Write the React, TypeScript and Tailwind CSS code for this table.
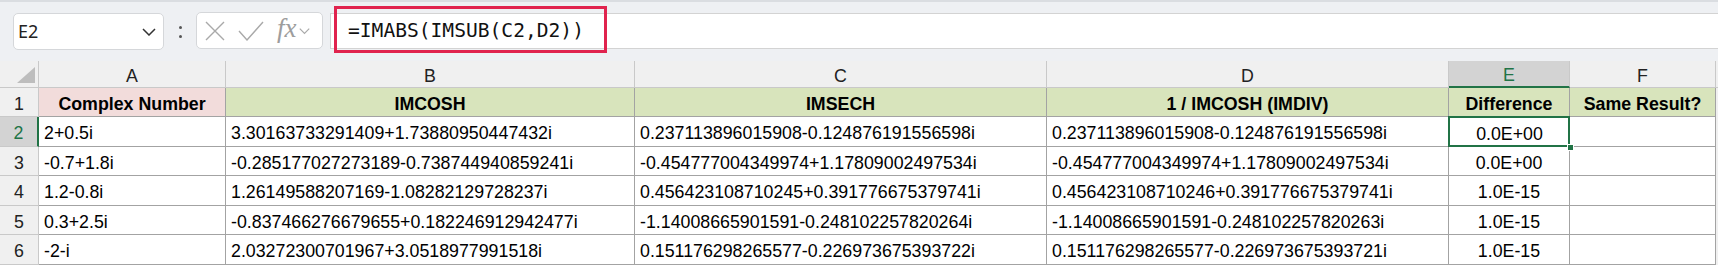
import { ReactNode } from "react";

const rows: string[][] = [
  ["2+0.5i", "3.30163733291409+1.73880950447432i", "0.237113896015908-0.124876191556598i", "0.237113896015908-0.124876191556598i", "0.0E+00", ""],
  ["-0.7+1.8i", "-0.285177027273189-0.738744940859241i", "-0.454777004349974+1.17809002497534i", "-0.454777004349974+1.17809002497534i", "0.0E+00", ""],
  ["1.2-0.8i", "1.26149588207169-1.08282129728237i", "0.456423108710245+0.391776675379741i", "0.456423108710246+0.391776675379741i", "1.0E-15", ""],
  ["0.3+2.5i", "-0.837466276679655+0.182246912942477i", "-1.14008665901591-0.248102257820264i", "-1.14008665901591-0.248102257820263i", "1.0E-15", ""],
  ["-2-i", "2.03272300701967+3.0518977991518i", "0.151176298265577-0.226973675393722i", "0.151176298265577-0.226973675393721i", "1.0E-15", ""],
];

const headers = ["Complex Number", "IMCOSH", "IMSECH", "1 / IMCOSH (IMDIV)", "Difference", "Same Result?"];
const letters = ["A", "B", "C", "D", "E", "F"];

function Chevron({ className }: { className: string }) {
  return (
    <svg width="14" height="8" viewBox="0 0 14 8" className={className}>
      <path d="M1 1l6 6 6-6" fill="none" stroke="currentColor" strokeWidth="1.5" />
    </svg>
  );
}

function Cell({ children, className = "" }: { children?: ReactNode; className?: string }) {
  return (
    <div className={"flex items-center pt-[3px] border-r border-b border-[#a3a3a3] whitespace-nowrap overflow-hidden leading-[20px] " + className}>
      {children}
    </div>
  );
}

export default function App() {
  return (
    <div className="w-[1718px] h-[269px] overflow-hidden bg-white text-black font-['Liberation_Sans',Arial,sans-serif]">
      {/* formula bar */}
      <div className="h-[61px] bg-[#eef0f3] border-t-2 border-[#dadde1] flex items-start pt-[11px]">
        <div className="ml-[13px] w-[151px] h-[37px] bg-white border border-[#d5d7da] rounded-[5px] flex items-center pl-[4px] pr-[7px]">
          <span className="text-[18px] text-[#222] font-['Noto_Sans',sans-serif] flex-1">E2</span>
          <Chevron className="text-[#333]" />
        </div>
        <div className="w-[32px] h-[37px] flex flex-col items-center justify-center gap-[6px]">
          <span className="w-[3px] h-[3px] bg-[#555] rounded-full" />
          <span className="w-[3px] h-[3px] bg-[#555] rounded-full" />
        </div>
        <div className="w-[127px] h-[37px] -mt-px bg-white border border-[#d5d7da] rounded-[5px] flex items-center pl-[8px] gap-[13px]">
          <svg width="20" height="20" viewBox="0 0 20 20">
            <path d="M1 1l18 18M19 1L1 19" stroke="#a9a9a9" strokeWidth="1.4" fill="none" />
          </svg>
          <svg width="26" height="20" viewBox="0 0 26 20">
            <path d="M1 10l8 9L25 1" stroke="#a9a9a9" strokeWidth="1.4" fill="none" />
          </svg>
          <div className="flex items-center gap-[2px]">
            <span className="text-[27px] italic text-[#9d9d9d] font-['Liberation_Serif',serif] leading-none -mt-[4px]">fx</span>
            <Chevron className="text-[#a9a9a9] w-[11px]" />
          </div>
        </div>
        <div className="relative ml-[7px] flex-1 h-[36px] bg-white border-y border-l border-[#d3d3d3] flex items-center pl-[17px]">
          <span className="text-[19.6px] font-['DejaVu_Sans_Mono',monospace] text-[#111]">=IMABS(IMSUB(C2,D2))</span>
          <div className="absolute left-[3px] top-[-8px] w-[273px] h-[47px] border-[3px] border-[#e0234e]" />
        </div>
      </div>

      {/* grid */}
      <div className="grid grid-cols-[39px_187px_409px_412px_402px_121px_146px_2px] grid-rows-[27px_29px_30px_29px_30px_29px_30px] text-[17.8px]">
        {/* column headers */}
        <div className="bg-[#f0f0f0] border-r border-b border-[#c9c9c9] relative">
          <svg width="18" height="16" viewBox="0 0 18 16" className="absolute right-[3px] bottom-[4px]">
            <path d="M18 0v16H0z" fill="#bdbdbd" />
          </svg>
        </div>
        {letters.map((l) =>
          l === "E" ? (
            <div key={l} className="bg-[#d3d3d3] border-r border-[#c9c9c9] border-b-2 border-b-[#217346] flex items-center justify-center pt-[3px] leading-[20px] text-[#217346]">
              {l}
            </div>
          ) : (
            <div key={l} className="bg-[#f0f0f0] border-r border-b border-[#c9c9c9] flex items-center justify-center pt-[3px] leading-[20px] text-[#222]">
              {l}
            </div>
          )
        )}
        <div className="bg-[#f0f0f0] border-b border-[#c9c9c9]" />

        {/* row 1 */}
        <div className="bg-[#f0f0f0] border-r border-b border-[#c9c9c9] flex items-center justify-center pt-[3px] leading-[20px] text-[#222]">1</div>
        {headers.map((h, i) => (
          <Cell key={h} className={"justify-center font-bold " + (i === 0 ? "bg-[#f2dcdb]" : "bg-[#d8e4bc]")}>
            {h}
          </Cell>
        ))}
        <div className="bg-[#f0f0f0]" />

        {/* data rows */}
        {rows.map((r, ri) => {
          const sel = ri === 0;
          return [
            <div
              key={"h" + ri}
              className={
                "border-b border-[#c9c9c9] flex items-center justify-center pt-[3px] leading-[20px] " +
                (sel ? "bg-[#d3d3d3] text-[#217346] border-r-2 border-r-[#217346]" : "bg-[#f0f0f0] text-[#222] border-r")
              }
            >
              {ri + 2}
            </div>,
            ...r.map((v, ci) =>
              ci === 4 && sel ? (
                <Cell key={ri + "-" + ci} className="justify-center relative !border-0 overflow-visible">
                  <div className="absolute inset-0 -top-px -left-px border-2 border-[#217346]" />
                  <div className="absolute right-[-4px] bottom-[-4px] w-[7px] h-[7px] bg-[#217346] border border-white z-10" />
                  {v}
                </Cell>
              ) : (
                <Cell key={ri + "-" + ci} className={ci === 4 ? "justify-center" : "pl-[5px]"}>
                  {v}
                </Cell>
              )
            ),
            <div key={"e" + ri} className="bg-[#f0f0f0]" />,
          ];
        })}
      </div>
    </div>
  );
}
